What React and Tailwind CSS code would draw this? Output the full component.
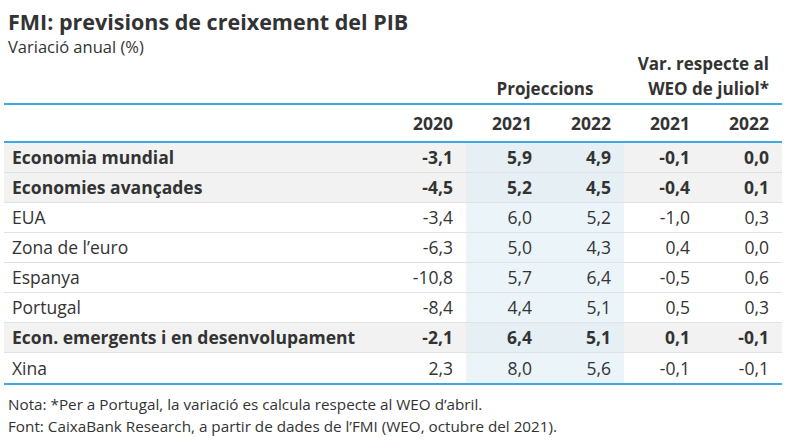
import React from "react";

const rows = [
  { name: "Economia mundial", v: ["-3,1", "5,9", "4,9", "-0,1", "0,0"], bold: true },
  { name: "Economies avançades", v: ["-4,5", "5,2", "4,5", "-0,4", "0,1"], bold: true },
  { name: "EUA", v: ["-3,4", "6,0", "5,2", "-1,0", "0,3"] },
  { name: "Zona de l’euro", v: ["-6,3", "5,0", "4,3", "0,4", "0,0"] },
  { name: "Espanya", v: ["-10,8", "5,7", "6,4", "-0,5", "0,6"] },
  { name: "Portugal", v: ["-8,4", "4,4", "5,1", "0,5", "0,3"] },
  { name: "Econ. emergents i en desenvolupament", v: ["-2,1", "6,4", "5,1", "0,1", "-0,1"], bold: true },
  { name: "Xina", v: ["2,3", "8,0", "5,6", "-0,1", "-0,1"] },
];

const font = { fontFamily: "'Open Sans', Lato, sans-serif" };

export default function App() {
  return (
    <div className="w-[800px] h-[448px] bg-white text-[#333333] overflow-hidden" style={font}>
      <div className="pl-[8px] pt-[7px]">
        <div className="text-[21.5px] font-bold leading-[30px]">FMI: previsions de creixement del PIB</div>
        <div className="text-[16.5px] leading-[20px]">Variació anual (%)</div>
      </div>
      <div className="ml-[4px] w-[778px]">
        <div className="flex items-end h-[46px] text-[17px] font-bold leading-[25px] pb-[2px]">
          <div className="w-[462px] shrink-0" />
          <div className="w-[158px] shrink-0 text-center">Projeccions</div>
          <div className="w-[158px] shrink-0 text-right pr-[13px]">
            <div>Var. respecte al</div>
            <div>WEO de juliol*</div>
          </div>
        </div>
        <div className="h-[2px] bg-[#3ca9e2]" />
        <div className="grid grid-cols-[383px_79px_79px_79px_79px_79px] h-[36px] items-center text-[17.5px] font-bold">
          <div />
          {["2020", "2021", "2022", "2021", "2022"].map((y, i) => (
            <div key={i} className="text-right pr-[13px]">{y}</div>
          ))}
        </div>
        <div className="h-[2px] bg-[#3ca9e2]" />
        {rows.map((r, idx) => (
          <div
            key={idx}
            className={`grid grid-cols-[383px_79px_79px_79px_79px_79px] h-[30px] text-[17.5px] ${
              idx < rows.length - 1 ? "border-b border-[#e2e2e2]" : ""
            } ${r.bold ? "font-bold bg-[#f2f2f2]" : "bg-white"}`}
          >
            <div className="pl-[8px] flex items-center">{r.name}</div>
            {r.v.map((val, i) => (
              <div
                key={i}
                className={`flex items-center justify-end pr-[13px] ${
                  i === 1 || i === 2 ? (r.bold ? "bg-[#e6eff4]" : "bg-[#ebf4f9]") : ""
                }`}
              >
                {val}
              </div>
            ))}
          </div>
        ))}
        <div className="h-[2px] bg-[#3ca9e2]" />
      </div>
      <div className="pl-[8px] pt-[8px] text-[15.25px] leading-[22px]">
        <div>Nota: *Per a Portugal, la variació es calcula respecte al WEO d’abril.</div>
        <div>Font: CaixaBank Research, a partir de dades de l’FMI (WEO, octubre del 2021).</div>
      </div>
    </div>
  );
}
